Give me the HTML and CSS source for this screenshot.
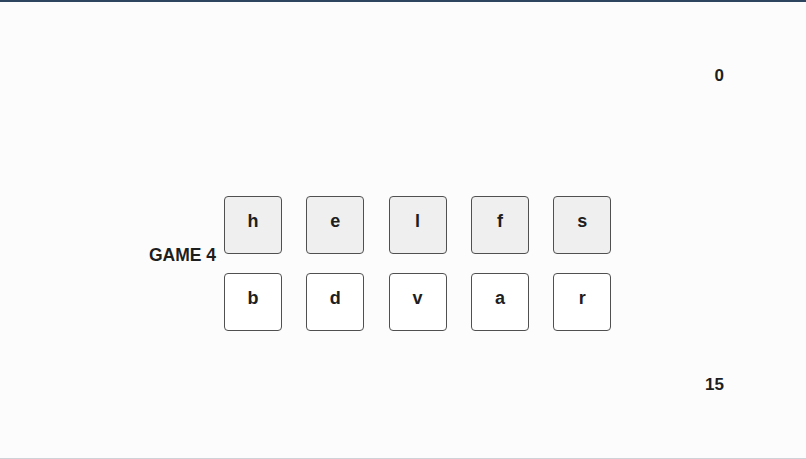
FILE: index.html
```
<!DOCTYPE html>
<html>
<head>
<meta charset="utf-8">
<link rel="stylesheet" href="styles.css">
</head>
<body>
<div class="page">
  <div class="score score-top">0</div>
  <div class="middle">
    <div class="label">GAME 4</div>
    <div class="board">
      <div class="tile given">h</div>
      <div class="tile given">e</div>
      <div class="tile given">l</div>
      <div class="tile given">f</div>
      <div class="tile given">s</div>
      <div class="tile">b</div>
      <div class="tile">d</div>
      <div class="tile">v</div>
      <div class="tile">a</div>
      <div class="tile">r</div>
    </div>
  </div>
  <div class="score score-bottom">15</div>
</div>
</body>
</html>
```
FILE: styles.css
```
html, body {
  margin: 0;
  padding: 0;
}
body {
  background: #fcfcfc;
  font-family: "Liberation Sans", Arial, sans-serif;
  color: #1e1e1e;
}
.page {
  box-sizing: border-box;
  height: 459px;
  border-top: 2px solid #2e4560;
  border-bottom: 1px solid #cfd2d6;
  padding-top: 65px;
}
.score {
  font-size: 17px;
  font-weight: bold;
  line-height: 18px;
  text-align: right;
  padding-right: 82px;
}
.middle {
  margin-top: 111px;
  display: grid;
  grid-template-columns: 216px auto;
  column-gap: 8px;
  align-items: center;
}
.label {
  text-align: right;
  font-size: 17.5px;
  font-weight: bold;
  line-height: 21px;
  margin-bottom: 16px;
}
.board {
  display: grid;
  grid-template-columns: repeat(5, 58px);
  grid-auto-rows: 58px;
  column-gap: 24.3px;
  row-gap: 19px;
}
.tile {
  box-sizing: border-box;
  border: 1px solid #505050;
  border-radius: 4px;
  background: #ffffff;
  display: flex;
  align-items: center;
  justify-content: center;
  padding-bottom: 7px;
  font-size: 18px;
  font-weight: bold;
  color: #1e1e1e;
}
.tile.given {
  background: #efefef;
}
.score-bottom {
  margin-top: 45px;
}
```
